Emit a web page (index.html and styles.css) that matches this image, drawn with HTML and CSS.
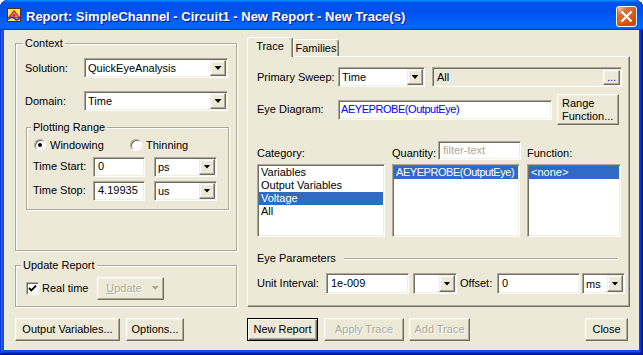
FILE: index.html
```html
<!DOCTYPE html>
<html lang="en">
  <head>
    <meta charset="UTF-8" />
    <meta name="viewport" content="width=device-width, initial-scale=1.0" />
    <link rel="stylesheet" href="styles.css">
    <title>Report: SimpleChannel - Circuit1 - New Report - New Trace(s)</title>
  </head>
  <body>
    <div class="window">
      <!-- title bar -->
      <div class="titlebar">
        <svg class="app-icon" width="14" height="14" viewBox="0 0 14 14">
          <rect x="0.5" y="0.5" width="13" height="13" fill="#ffe84a" stroke="#4a3410" />
          <path d="M2 9.5 L7 3 L12 9.5 Z" fill="#f5f0c8" stroke="#e0241b" stroke-width="1.6" />
          <circle cx="7" cy="7.3" r="1.6" fill="#e0241b" />
          <path d="M1.2 11.5 Q4.5 7.5 7.5 10.5 T13 9.5" fill="none" stroke="#1d3ccf" stroke-width="1.7" />
        </svg>
        <span class="title">Report: SimpleChannel - Circuit1 - New Report - New Trace(s)</span>
        <span class="close-btn">
          <svg width="19" height="19" viewBox="0 0 19 19">
            <path d="M4.5 4.5 L14.5 14.5 M14.5 4.5 L4.5 14.5" stroke="#fff" stroke-width="2.3" />
          </svg>
        </span>
      </div>

      <div class="client">
        <div class="main">
          <!-- left column -->
          <div class="left-col">
            <fieldset class="group context">
              <legend>Context</legend>
              <div class="form-row">
                <label class="lbl-ctx">Solution:</label>
                <div class="combo combo-ctx"><span class="combo-text">QuickEyeAnalysis</span><span class="drop"></span></div>
              </div>
              <div class="form-row">
                <label class="lbl-ctx">Domain:</label>
                <div class="combo combo-ctx"><span class="combo-text">Time</span><span class="drop"></span></div>
              </div>

              <fieldset class="group plotting">
                <legend>Plotting Range</legend>
                <div class="radio-row">
                  <span class="radio-item windowing"><span class="radio checked"></span>Windowing</span>
                  <span class="radio-item"><span class="radio"></span>Thinning</span>
                </div>
                <div class="time-row">
                  <label class="lbl-time">Time Start:</label>
                  <div class="textbox time-box">0</div>
                  <div class="combo unit-combo"><span class="combo-text">ps</span><span class="drop"></span></div>
                </div>
                <div class="time-row">
                  <label class="lbl-time">Time Stop:</label>
                  <div class="textbox time-box">4.19935</div>
                  <div class="combo unit-combo"><span class="combo-text">us</span><span class="drop"></span></div>
                </div>
              </fieldset>
            </fieldset>

            <fieldset class="group update">
              <legend>Update Report</legend>
              <div class="update-row">
                <span class="checkbox">
                  <svg width="9" height="9" viewBox="0 0 9 9">
                    <path d="M1 4 L3.3 6.3 L8 1.6" fill="none" stroke="#000" stroke-width="1.9" />
                  </svg>
                </span>
                <span class="check-label">Real time</span>
                <span class="btn disabled update-btn"><span><u>U</u>pdate</span><span class="arrow-off"></span></span>
              </div>
            </fieldset>
          </div>

          <!-- right column: tabs -->
          <div class="right-col">
            <div class="tab-strip">
              <div class="tab active">Trace</div>
              <div class="tab families">Families</div>
            </div>
            <div class="tab-panel">
              <div class="sweep-row">
                <label class="lbl-trace">Primary Sweep:</label>
                <div class="combo sweep-combo"><span class="combo-text">Time</span><span class="drop"></span></div>
                <div class="textbox all-box"><span>All</span><span class="btn dots-btn">...</span></div>
              </div>
              <div class="eye-row">
                <label class="lbl-trace">Eye Diagram:</label>
                <div class="textbox eye-box"><span class="blue tight">AEYEPROBE(OutputEye)</span></div>
                <span class="btn range-btn">Range<br>Function...</span>
              </div>
              <div class="label-row">
                <label class="col-cat">Category:</label>
                <div class="col-qty">
                  <label>Quantity:</label>
                  <div class="textbox filter-box"><span class="placeholder">filter-text</span></div>
                </div>
                <label>Function:</label>
              </div>
              <div class="lists-row">
                <div class="listbox list-cat">
                  <div class="item">Variables</div>
                  <div class="item">Output Variables</div>
                  <div class="item selected">Voltage</div>
                  <div class="item">All</div>
                </div>
                <div class="listbox list-qty">
                  <div class="item selected"><span class="tight">AEYEPROBE(OutputEye)</span></div>
                </div>
                <div class="listbox list-fn">
                  <div class="item selected">&lt;none&gt;</div>
                </div>
              </div>
              <div class="eye-params">
                <span>Eye Parameters</span>
                <span class="etched-line"></span>
              </div>
              <div class="unit-row">
                <label class="lbl-unit">Unit Interval:</label>
                <div class="textbox unit-box">1e-009</div>
                <div class="combo small-combo"><span class="combo-text"></span><span class="drop"></span></div>
                <label class="lbl-offset">Offset:</label>
                <div class="textbox unit-box">0</div>
                <div class="combo ms-combo"><span class="combo-text">ms</span><span class="drop"></span></div>
              </div>
            </div>
          </div>
        </div>

        <!-- bottom buttons -->
        <div class="button-row">
          <span class="btn btn-outvars">Output Variables...</span>
          <span class="btn btn-options">Options...</span>
          <span class="btn default btn-new">New Report</span>
          <span class="btn disabled btn-apply">Apply Trace</span>
          <span class="btn disabled btn-add">Add Trace</span>
          <span class="btn btn-close">Close</span>
        </div>
      </div>
    </div>
  </body>
</html>
```

FILE: styles.css
```css
* {
  box-sizing: border-box;
}

body {
  margin: 0;
  background: #fff;
  font-family: "Liberation Sans", Arial, sans-serif;
  font-size: 11px;
  line-height: 13px;
  color: #000;
}

/* window frame */
.window {
  width: 643px;
  height: 355px;
  display: flex;
  flex-direction: column;
  background: #0054e3;
  border-radius: 8px 8px 0 0;
  overflow: hidden;
  box-shadow: inset -1px -1px #00138c, inset 1px 1px #0831d9,
    inset -2px -2px #001ea0, inset 2px 2px #166aee,
    inset -3px -3px #003bda, inset 3px 3px #0855dd;
}

.titlebar {
  height: 30px;
  flex-shrink: 0;
  display: flex;
  align-items: flex-start;
  padding: 0 6px 0 7px;
  border-radius: 8px 8px 0 0;
  background: linear-gradient(180deg, #0997ff, #0053ee 8%, #0050ee 40%, #0066ff 88%, #0066ff 93%, #005bff 95%, #003dd7 96%, #003dd7);
}

.app-icon {
  margin-top: 8px;
  flex-shrink: 0;
}

.title {
  margin: 9px 0 0 5px;
  font-size: 13px;
  line-height: 16px;
  font-weight: bold;
  color: #fff;
  white-space: nowrap;
  text-shadow: 1px 1px #0f1089;
}

.close-btn {
  margin: 6px 0 0 auto;
  width: 21px;
  height: 21px;
  border: 1px solid #fff;
  border-radius: 3px;
  background: radial-gradient(circle at 90% 90%, #cc4600 0%, #dc6527 55%, #cd7546 70%, #ffccb2 90%, #fff 100%);
  box-shadow: inset 0 -1px 2px 1px #da4600;
}

.close-btn svg {
  display: block;
}

.client {
  flex: 1;
  margin: 0 4px 5px;
  background: #ece9d8;
  display: flex;
  flex-direction: column;
}

.main {
  display: flex;
  margin-top: 7px;
}

/* group boxes */
.group {
  margin: 0;
  border: 1px solid #aca899;
  box-shadow: inset 1px 1px #fff, 1px 1px #fff;
}

.group legend {
  padding: 0 2px;
  background: #ece9d8;
  line-height: 13px;
}

.left-col {
  margin-left: 11px;
  width: 222px;
  display: flex;
  flex-direction: column;
}

.context {
  height: 214px;
  padding: 8px 0 0 9px;
}

.context > legend {
  margin-left: -2px;
}

.form-row {
  display: flex;
  align-items: center;
  height: 20px;
}

.form-row + .form-row {
  margin-top: 13px;
}

.lbl-ctx {
  width: 59px;
}

.combo-ctx {
  width: 144px;
}

.plotting {
  margin: 10px 0 0 1px;
  width: 203px;
  height: 89px;
  padding: 4px 0 0 6px;
}

.plotting > legend {
  margin-left: -2px;
}

.radio-row {
  display: flex;
  align-items: center;
  height: 14px;
  padding-left: 1px;
}

.radio-item {
  display: flex;
  align-items: center;
}

.windowing {
  width: 96px;
}

.radio {
  width: 12px;
  height: 12px;
  margin-right: 4px;
  border-radius: 50%;
  background: #fff;
  border: 1px solid;
  border-color: #aca899 #fff #fff #aca899;
  box-shadow: inset 1px 1px #716f64, inset -1px -1px #f1efe2;
  display: flex;
  align-items: center;
  justify-content: center;
}

.radio.checked::after {
  content: "";
  width: 4px;
  height: 4px;
  border-radius: 50%;
  background: #000;
}

.time-row {
  display: flex;
  align-items: center;
  height: 21px;
  margin-top: 4px;
}

.time-row + .time-row {
  margin-top: 3px;
}

.lbl-time {
  width: 60px;
}

.time-box {
  width: 52px;
  height: 21px;
}

.unit-combo {
  width: 63px;
  margin-left: 9px;
}

.update {
  margin-top: 8px;
  height: 48px;
  padding: 5px 0 0 10px;
}

.update > legend {
  margin-left: -5px;
}

.update-row {
  display: flex;
  align-items: center;
  height: 22px;
}

.checkbox {
  width: 13px;
  height: 13px;
  margin-right: 3px;
  background: #fff;
  border: 1px solid;
  border-color: #aca899 #fff #fff #aca899;
  box-shadow: inset 1px 1px #716f64, inset -1px -1px #f1efe2;
  display: flex;
  align-items: center;
  justify-content: center;
}

.checkbox svg {
  display: block;
}

.check-label {
  width: 55px;
}

.update-btn {
  width: 67px;
  height: 22px;
  gap: 10px;
  padding-left: 4px;
}

.arrow-off {
  width: 7px;
  height: 4px;
  background: #aca899;
  clip-path: polygon(0 0, 100% 0, 50% 100%);
  filter: drop-shadow(1px 1px #fff);
}

/* fields */
.textbox,
.combo,
.listbox {
  background: #fff;
  border: 1px solid;
  border-color: #aca899 #fff #fff #aca899;
  box-shadow: inset 1px 1px #716f64, inset -1px -1px #f1efe2;
}

.textbox {
  display: flex;
  align-items: center;
  height: 20px;
  padding: 0 4px;
  white-space: nowrap;
}

.combo {
  display: flex;
  height: 20px;
  padding: 1px;
}

.combo-text {
  flex: 1;
  display: flex;
  align-items: center;
  padding: 1px 0 0 2px;
  white-space: nowrap;
}

.drop {
  width: 16px;
  flex-shrink: 0;
  display: flex;
  align-items: center;
  justify-content: center;
  background: #ece9d8;
  border: 1px solid;
  border-color: #f1efe2 #716f64 #716f64 #f1efe2;
  box-shadow: inset -1px -1px #aca899, inset 1px 1px #fff;
}

.drop::after {
  content: "";
  width: 7px;
  height: 4px;
  background: #000;
  clip-path: polygon(0 0, 100% 0, 50% 100%);
}

/* buttons */
.btn {
  display: flex;
  align-items: center;
  justify-content: center;
  height: 23px;
  background: #ece9d8;
  border: 1px solid;
  border-color: #fff #716f64 #716f64 #fff;
  box-shadow: inset -1px -1px #aca899, inset 1px 1px #f1efe2;
  white-space: nowrap;
}

.btn.default {
  border-color: #000;
  box-shadow: inset 1px 1px #fff, inset -1px -1px #716f64, inset -2px -2px #aca899;
}

.btn.disabled {
  color: #aca899;
  text-shadow: 1px 1px #fff;
}

/* tabs */
.right-col {
  margin-left: 10px;
  width: 383px;
  display: flex;
  flex-direction: column;
}

.tab-strip {
  display: flex;
  align-items: flex-end;
  height: 19px;
}

.tab {
  height: 17px;
  display: flex;
  align-items: center;
  justify-content: center;
  border: 1px solid;
  border-bottom: none;
  border-color: #fff #716f64 #716f64 #fff;
  border-radius: 3px 3px 0 0;
  box-shadow: inset -1px 0 #aca899;
}

.tab.active {
  width: 46px;
  height: 20px;
  margin-bottom: -1px;
  padding-bottom: 2px;
  position: relative;
  background: #ece9d8;
}

.tab.families {
  width: 46px;
}

.tab-panel {
  height: 251px;
  padding: 10px 0 0 9px;
  border: 1px solid;
  border-color: #fff #716f64 #716f64 #fff;
  box-shadow: inset -1px -1px #aca899;
}

.lbl-trace {
  width: 81px;
}

.sweep-row {
  display: flex;
  align-items: center;
  height: 20px;
}

.sweep-combo {
  width: 87px;
}

.all-box {
  width: 190px;
  margin-left: 7px;
  background: #ece9d8;
  padding-right: 1px;
}

.dots-btn {
  width: 17px;
  height: 15px;
  margin-left: auto;
  color: #0000ff;
  line-height: 10px;
  align-items: flex-end;
  padding-bottom: 2px;
}

.eye-row {
  display: flex;
  align-items: center;
  height: 31px;
  margin-top: 7px;
}

.eye-box {
  width: 214px;
  padding-left: 2px;
}

.blue {
  color: #0000ff;
}

.tight {
  letter-spacing: -0.45px;
}

.range-btn {
  width: 62px;
  height: 31px;
  margin-left: 5px;
  justify-content: flex-start;
  padding-left: 4px;
  line-height: 13px;
}

.label-row {
  display: flex;
  align-items: flex-end;
  height: 19px;
  margin-top: 16px;
}

.col-cat {
  width: 135px;
}

.col-qty {
  width: 135px;
  display: flex;
  align-items: flex-end;
}

.col-qty label {
  width: 46px;
}

.filter-box {
  width: 83px;
  height: 19px;
}

.placeholder {
  color: #aca899;
}

.lists-row {
  display: flex;
  gap: 7px;
  height: 73px;
  margin-top: 4px;
}

.listbox {
  padding: 1px;
  overflow: hidden;
}

.list-cat,
.list-qty {
  width: 128px;
}

.list-fn {
  width: 94px;
}

.item {
  height: 13px;
  padding-left: 2px;
  white-space: nowrap;
}

.item.selected {
  background: #316ac5;
  color: #fff;
}

.eye-params {
  display: flex;
  align-items: center;
  height: 13px;
  margin-top: 15px;
}

.etched-line {
  flex: 1;
  height: 2px;
  margin: 1px 12px 0 8px;
  border-top: 1px solid #aca899;
  border-bottom: 1px solid #fff;
}

.unit-row {
  display: flex;
  align-items: center;
  height: 21px;
  margin-top: 8px;
}

.lbl-unit {
  width: 69px;
}

.unit-box {
  width: 83px;
  height: 21px;
}

.small-combo {
  width: 44px;
  height: 21px;
  margin-left: 4px;
}

.lbl-offset {
  width: 37px;
  margin-left: 3px;
}

.ms-combo {
  width: 43px;
  height: 21px;
  margin-left: 2px;
}

/* bottom row */
.button-row {
  display: flex;
  margin-top: 11px;
  padding-left: 11px;
}

.btn-outvars {
  width: 105px;
}

.btn-options {
  width: 58px;
  margin-left: 6px;
}

.btn-new {
  width: 71px;
  margin-left: 63px;
}

.btn-apply {
  width: 80px;
  margin-left: 6px;
}

.btn-add {
  width: 61px;
  margin-left: 5px;
}

.btn-close {
  width: 43px;
  margin-left: auto;
  margin-right: 11px;
}
```
